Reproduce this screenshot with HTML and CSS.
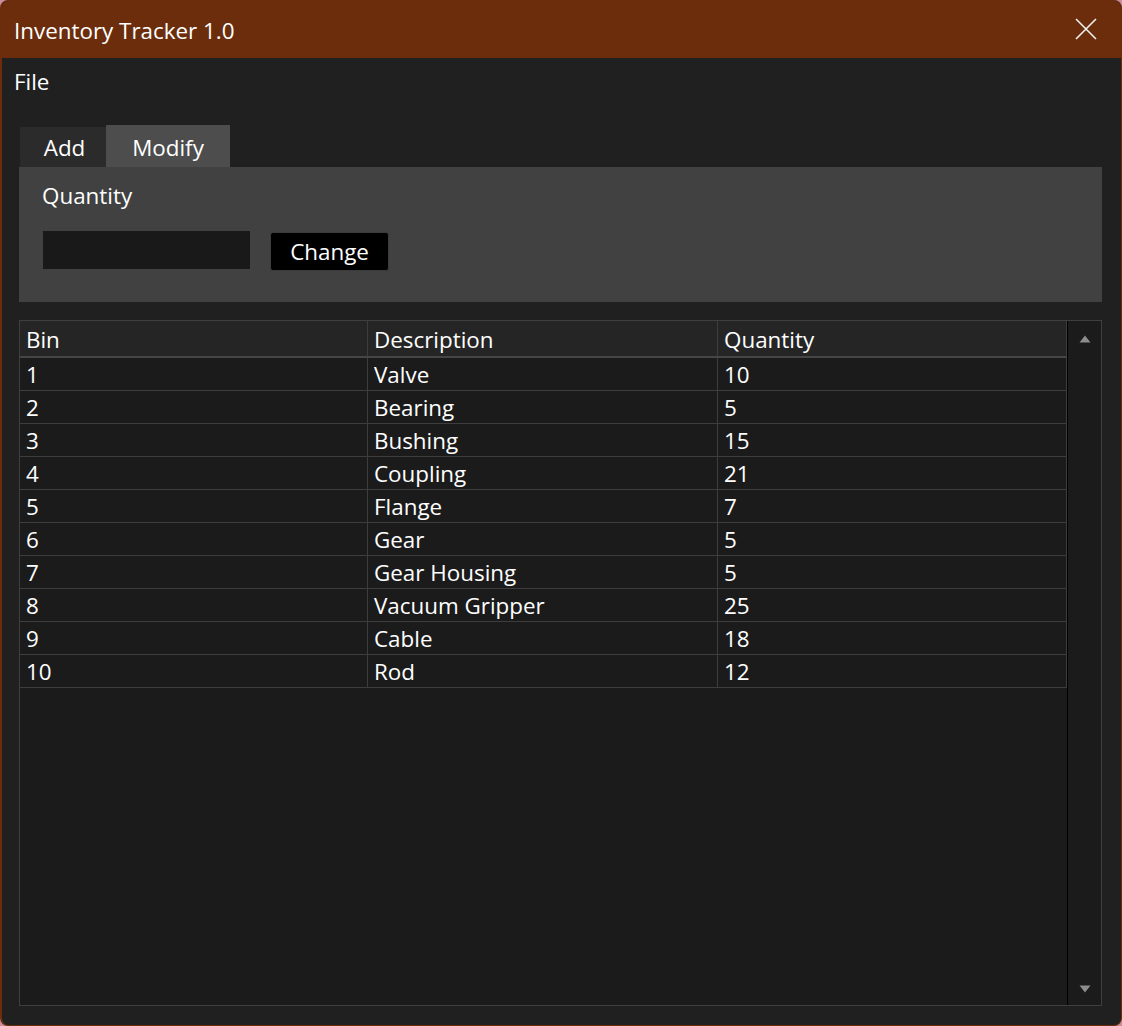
FILE: index.html
```html
<!DOCTYPE html>
<html>
<head>
<meta charset="utf-8">
<link rel="stylesheet" href="styles.css">
</head>
<body>
<div class="window">
  <div class="titlebar">
    <span class="title">Inventory Tracker 1.0</span>
    <svg class="close" width="22" height="22" viewBox="0 0 22 22"><path d="M1 1 L21 21 M21 1 L1 21" stroke="#f2f2f2" stroke-width="1.6" fill="none"/></svg>
  </div>
  <div class="menubar"><span class="menuitem">File</span></div>
  <div class="content">
    <div class="tabs">
      <div class="tab">Add</div>
      <div class="tab active">Modify</div>
    </div>
    <div class="panel">
      <div class="label">Quantity</div>
      <div class="controls">
        <div class="input"></div>
        <div class="button">Change</div>
      </div>
    </div>
    <div class="grid">
      <div class="table">
        <div class="row head"><div class="cell">Bin</div><div class="cell">Description</div><div class="cell">Quantity</div></div>
        <div class="row"><div class="cell">1</div><div class="cell">Valve</div><div class="cell">10</div></div>
        <div class="row"><div class="cell">2</div><div class="cell">Bearing</div><div class="cell">5</div></div>
        <div class="row"><div class="cell">3</div><div class="cell">Bushing</div><div class="cell">15</div></div>
        <div class="row"><div class="cell">4</div><div class="cell">Coupling</div><div class="cell">21</div></div>
        <div class="row"><div class="cell">5</div><div class="cell">Flange</div><div class="cell">7</div></div>
        <div class="row"><div class="cell">6</div><div class="cell">Gear</div><div class="cell">5</div></div>
        <div class="row"><div class="cell">7</div><div class="cell">Gear Housing</div><div class="cell">5</div></div>
        <div class="row"><div class="cell">8</div><div class="cell">Vacuum Gripper</div><div class="cell">25</div></div>
        <div class="row"><div class="cell">9</div><div class="cell">Cable</div><div class="cell">18</div></div>
        <div class="row"><div class="cell">10</div><div class="cell">Rod</div><div class="cell">12</div></div>
      </div>
      <div class="scrollbar">
        <svg width="12" height="8" viewBox="0 0 12 8"><path d="M6 0.5 L11.5 7.5 L0.5 7.5 Z" fill="#8c8c8c"/></svg>
        <svg width="12" height="8" viewBox="0 0 12 8"><path d="M0.5 0.5 L11.5 0.5 L6 7.5 Z" fill="#8c8c8c"/></svg>
      </div>
    </div>
  </div>
</div>
</body>
</html>
```
FILE: styles.css
```css
html, body {
  margin: 0;
  padding: 0;
  background: #c98c9c;
}
body {
  width: 1122px;
  height: 1026px;
  overflow: hidden;
  font-family: "Open Sans", "Noto Sans", sans-serif;
  color: #ffffff;
}
.window {
  box-sizing: border-box;
  width: 1122px;
  height: 1026px;
  border: 1px solid #6b2d0c;
  border-left-width: 2px;
  border-radius: 8px;
  background: #202020;
  overflow: hidden;
  display: flex;
  flex-direction: column;
}
.titlebar {
  height: 57px;
  flex: none;
  background: #6b2d0c;
  display: flex;
  align-items: center;
  justify-content: space-between;
  padding: 0 24px 0 12px;
}
.title {
  font-size: 22.4px;
  padding-top: 2px;
}
.close {
  display: block;
  margin-top: -2px;
}
.menubar {
  height: 46px;
  flex: none;
  display: flex;
  align-items: center;
  padding-left: 12px;
}
.menuitem {
  font-size: 22.4px;
}
.content {
  flex: 1;
  display: flex;
  flex-direction: column;
  padding: 20px 19px 19px 17px;
  min-height: 0;
}
.tabs {
  display: flex;
  align-items: flex-end;
  padding-left: 1px;
  height: 43px;
}
.tab {
  font-size: 22.4px;
  height: 40px;
  box-sizing: border-box;
  background: #2b2b2b;
  display: flex;
  align-items: center;
  justify-content: center;
  width: 86px;
  padding-left: 3px;
}
.tab.active {
  background: #4d4d4d;
  width: 124px;
  height: 43px;
  padding-top: 2px;
  padding-left: 0;
  margin-bottom: -1px;
}
.panel {
  background: #414141;
  height: 135px;
  box-sizing: border-box;
  padding: 14px 23px 0 23px;
}
.label {
  font-size: 22.4px;
  line-height: 30px;
}
.controls {
  display: flex;
  align-items: flex-start;
  margin-top: 20px;
  gap: 20px;
}
.input {
  width: 207px;
  height: 38px;
  margin-left: 1px;
  background: #191919;
}
.button {
  box-sizing: border-box;
  width: 119px;
  height: 39px;
  margin-top: 1px;
  background: #000000;
  border: 1px solid #3c3c3c;
  border-radius: 3px;
  font-size: 22.4px;
  display: flex;
  align-items: center;
  justify-content: center;
}
.grid {
  flex: 1;
  margin-top: 18px;
  border: 1px solid #3f3f3f;
  background: #1b1b1b;
  display: flex;
  min-height: 0;
}
.table {
  width: 1047px;
  flex: none;
}
.row {
  display: grid;
  grid-template-columns: 348px 350px 349px;
  height: 33px;
  box-sizing: border-box;
  border-bottom: 1px solid #3d3d3d;
}
.row.head {
  height: 37px;
  background: #252525;
  border-bottom: 2px solid #464646;
}
.cell {
  box-sizing: border-box;
  border-right: 1px solid #3d3d3d;
  font-size: 22.4px;
  padding-left: 6px;
  padding-top: 1px;
  display: flex;
  align-items: center;
  white-space: nowrap;
}
.scrollbar {
  flex: 1;
  border-left: 1px solid #000000;
  background: #1b1b1b;
  display: flex;
  flex-direction: column;
  justify-content: space-between;
  align-items: center;
  padding: 14px 0 12px 0;
}
.scrollbar svg {
  display: block;
}
```
